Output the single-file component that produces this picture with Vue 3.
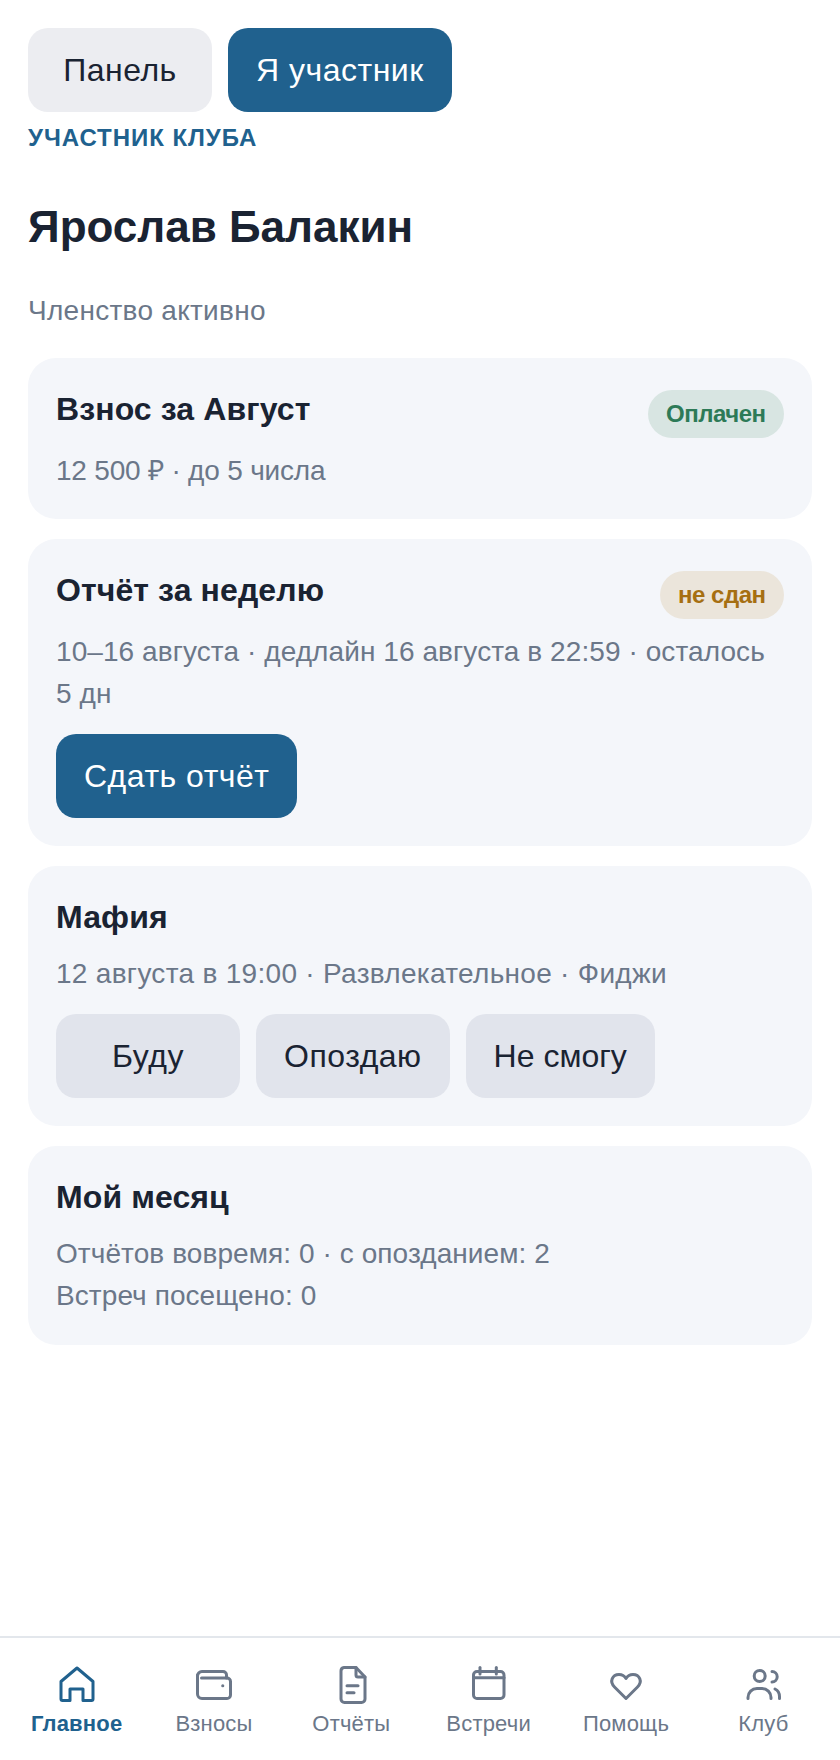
<template>
  <div class="app">
    <main class="content">
      <div class="switcher">
        <button class="btn btn-muted">Панель</button>
        <button class="btn btn-primary">Я участник</button>
      </div>
      <div class="eyebrow">УЧАСТНИК КЛУБА</div>
      <h1 class="name">Ярослав Балакин</h1>
      <p class="status">Членство активно</p>

      <section class="card">
        <div class="card-head">
          <h2>Взнос за Август</h2>
          <span class="badge badge-ok">Оплачен</span>
        </div>
        <p class="meta meta-tight">12 500 ₽ · до 5 числа</p>
      </section>

      <section class="card">
        <div class="card-head">
          <h2>Отчёт за неделю</h2>
          <span class="badge badge-warn">не сдан</span>
        </div>
        <p class="meta">10–16 августа · дедлайн 16 августа в 22:59 · осталось 5 дн</p>
        <div class="actions">
          <button class="btn btn-primary">Сдать отчёт</button>
        </div>
      </section>

      <section class="card">
        <div class="card-head">
          <h2>Мафия</h2>
        </div>
        <p class="meta meta-wide">12 августа в 19:00 · Развлекательное · Фиджи</p>
        <div class="actions">
          <button class="btn btn-soft">Буду</button>
          <button class="btn btn-soft">Опоздаю</button>
          <button class="btn btn-soft btn-plain">Не смогу</button>
        </div>
      </section>

      <section class="card">
        <div class="card-head">
          <h2>Мой месяц</h2>
        </div>
        <p class="meta">Отчётов вовремя: 0 · с опозданием: 2<br />Встреч посещено: 0</p>
      </section>
    </main>

    <nav class="tabbar">
      <a v-for="tab in tabs" :key="tab.label" class="tab" :class="{ active: tab.active }">
        <svg viewBox="0 0 40 40" width="40" height="40" fill="none" stroke="currentColor" stroke-width="3" stroke-linecap="round" stroke-linejoin="round">
          <path v-for="d in tab.paths" :key="d" :d="d" />
        </svg>
        <span>{{ tab.label }}</span>
      </a>
    </nav>
  </div>
</template>

<script setup>
const tabs = [
  {
    label: 'Главное',
    active: true,
    paths: ['M20 3 4 16.5V34a1.5 1.5 0 0 0 1.5 1.5H13V24h13v11.5h8.5A1.5 1.5 0 0 0 36 34V16.5Z']
  },
  {
    label: 'Взносы',
    paths: [
      'M3.5 11A4.5 4.5 0 0 1 8 6.5h21a3.5 3.5 0 0 1 3.5 3.5v3',
      'M3.5 10v19A4.5 4.5 0 0 0 8 33.5h25a3.5 3.5 0 0 0 3.5-3.5V16.5A3.5 3.5 0 0 0 33 13H7.5',
      'M28.7 20.7h.1'
    ]
  },
  {
    label: 'Отчёты',
    paths: [
      'M13 2.5h12L34 12v22a3.5 3.5 0 0 1-3.5 3.5h-17A3.5 3.5 0 0 1 10 34V6a3.5 3.5 0 0 1 3-3.5Z',
      'M25 2.5V10a2 2 0 0 0 2 2h7',
      'M16 20.7h11',
      'M16 27.7h7'
    ]
  },
  {
    label: 'Встречи',
    paths: [
      'M8 6.5h23.5A3.5 3.5 0 0 1 35 10v20a3.5 3.5 0 0 1-3.5 3.5H8A3.5 3.5 0 0 1 4.5 30V10A3.5 3.5 0 0 1 8 6.5Z',
      'M11 2.5V9',
      'M27.3 2.5V9',
      'M4.5 12.7H35'
    ]
  },
  {
    label: 'Помощь',
    paths: ['M20 33.5 8.5 22C3 16.500 6.500 9.500 13 9.500c3 0 5.500 1.500 7 4 1.500-2.500 4-4 7-4 6.500 0 10 7 4.500 12.500Z']
  },
  {
    label: 'Клуб',
    paths: [
      'M5 33.5v-1c0-5 4-9 9-9h5c5 0 9 4 9 9v1',
      'M16.7 5.5a5.5 5.5 0 1 0 0 11 5.5 5.5 0 0 0 0-11Z',
      'M29 6.5a5.2 5.2 0 0 1 0 10.4',
      'M32 24c3 1.5 4.5 4.5 4.5 7.5v2'
    ]
  }
]
</script>

<style scoped>
.app {
  min-height: 1760px;
  display: flex;
  flex-direction: column;
  background: #fff;
  font-family: "Liberation Sans", Arial, sans-serif;
  color: #1a2332;
}

.content {
  flex: 1;
  padding: 28px;
}

.switcher {
  display: flex;
  gap: 16px;
}

.btn {
  height: 84px;
  padding: 0 28px;
  border: 0;
  border-radius: 20px;
  font-family: inherit;
  font-size: 32px;
  letter-spacing: 0.5px;
  color: #1a2332;
}

.btn-muted {
  min-width: 184px;
  background: #ecedf1;
}

.btn-primary {
  background: #20618e;
  color: #fff;
}

.btn-soft {
  min-width: 184px;
  background: #e1e4ec;
}

.btn-plain {
  letter-spacing: 0;
}

.eyebrow {
  margin-top: 12px;
  font-size: 24px;
  line-height: 28px;
  font-weight: 700;
  letter-spacing: 0.96px;
  color: #20618e;
}

.name {
  margin: 47px 0 0;
  font-size: 44px;
  line-height: 56px;
  font-weight: 700;
}

.status {
  margin: 35px 0 0;
  font-size: 28px;
  line-height: 42px;
  letter-spacing: 0.28px;
  color: #6b7789;
}

.card {
  margin-top: 20px;
  padding: 32px 28px 28px;
  border-radius: 28px;
  background: #f4f6fa;
}

.status + .card {
  margin-top: 26px;
}

.card-head {
  display: flex;
  justify-content: space-between;
  align-items: flex-start;
  gap: 16px;
}

.card h2 {
  margin: 0;
  padding-bottom: 5px;
  font-size: 32px;
  line-height: 38px;
  font-weight: 700;
  letter-spacing: 0.1px;
}

.badge {
  padding: 0 18.5px;
  height: 48px;
  line-height: 48px;
  border-radius: 24px;
  font-size: 24px;
  font-weight: 700;
  letter-spacing: -0.5px;
  white-space: nowrap;
}

.badge-ok {
  background: #d8e5e2;
  color: #2d7a57;
}

.badge-warn {
  background: #ebe5db;
  color: #a66f12;
}

.meta {
  margin: 12px 0 0;
  font-size: 28px;
  line-height: 42px;
  letter-spacing: 0.08px;
  color: #6b7789;
}

.meta-tight {
  margin-bottom: -1px;
  letter-spacing: -0.2px;
}

.meta-wide {
  letter-spacing: 0.3px;
}

.actions {
  display: flex;
  gap: 16px;
  margin-top: 19px;
}

.tabbar {
  display: flex;
  height: 124px;
  box-sizing: border-box;
  padding: 27px 8px 0;
  border-top: 2px solid #e3e7ec;
  background: #fff;
}

.tab {
  flex: 1;
  display: flex;
  flex-direction: column;
  align-items: center;
  gap: 6px;
  font-size: 22px;
  line-height: 26px;
  letter-spacing: 0.2px;
  color: #6b7789;
}

.tab.active {
  color: #20618e;
  font-weight: 700;
}
</style>
